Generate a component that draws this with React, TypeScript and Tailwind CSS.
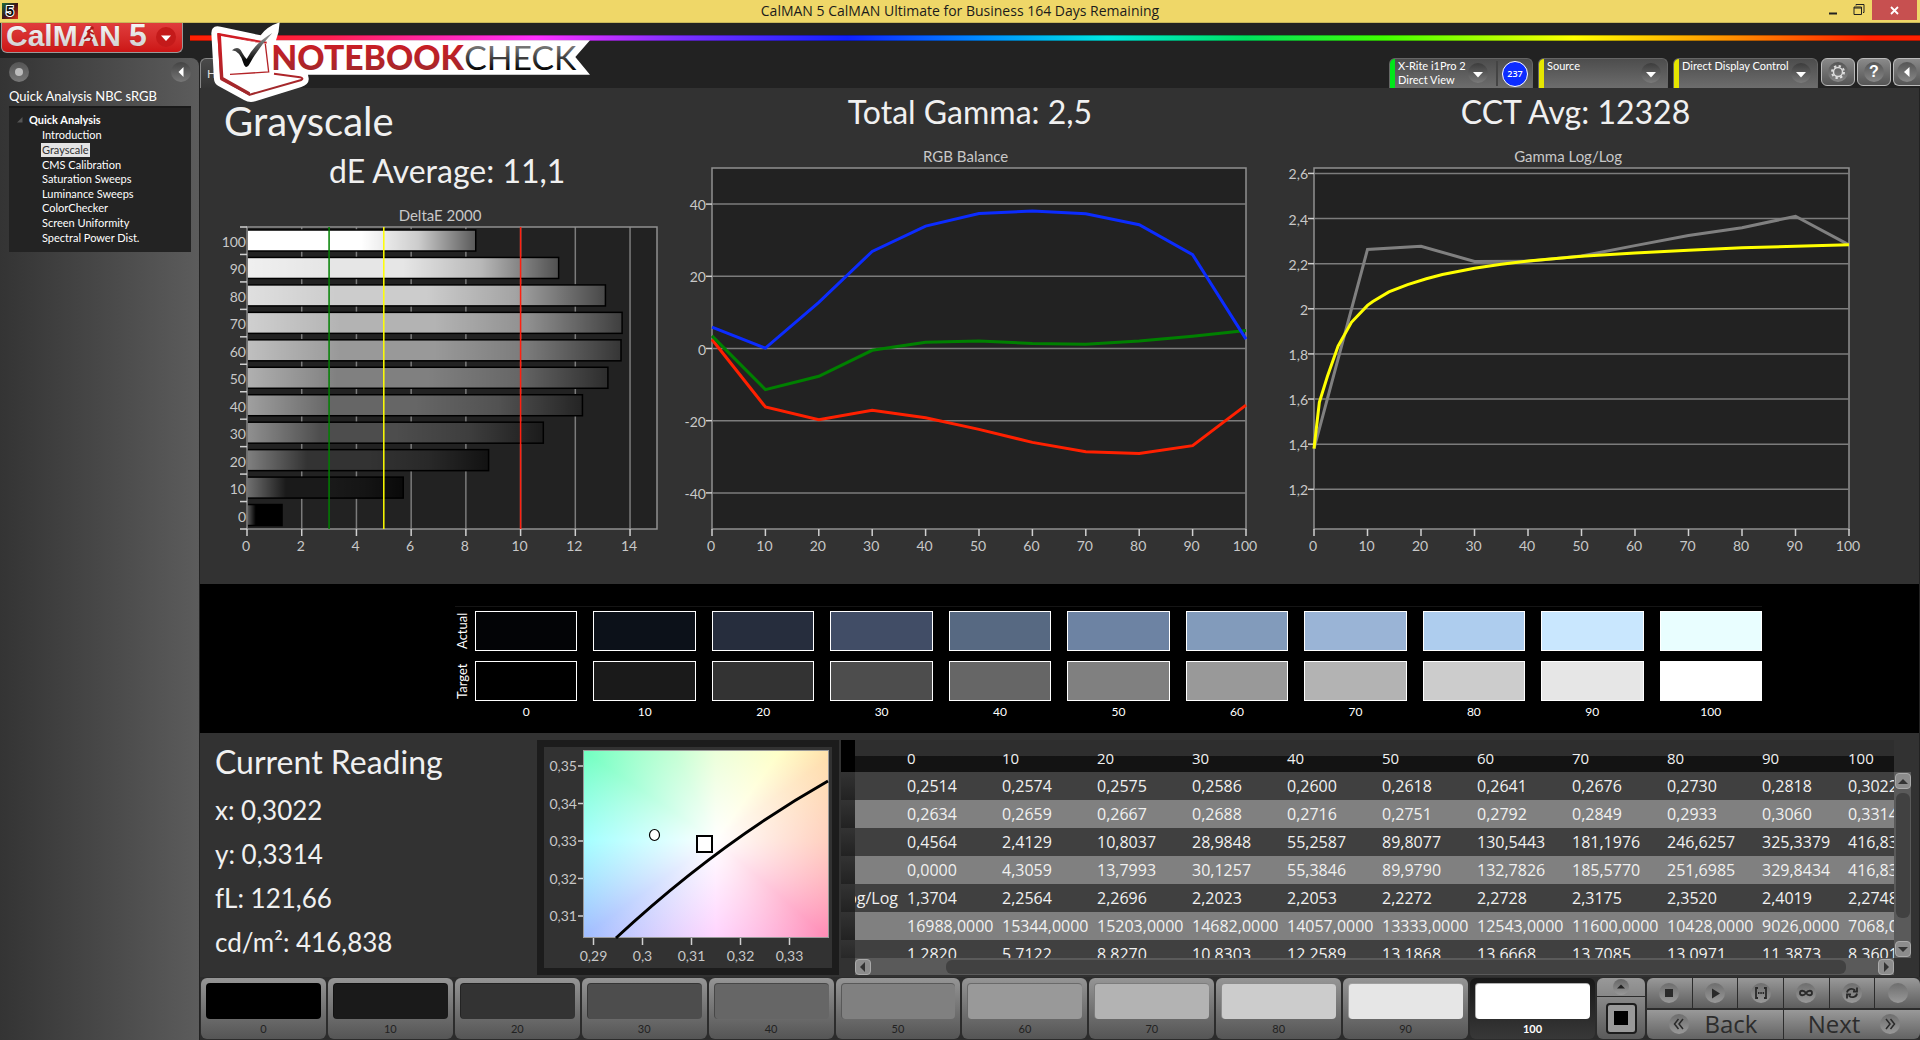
import React, { useState } from 'react'

const levels = [0, 10, 20, 30, 40, 50, 60, 70, 80, 90, 100]
const grays = ['#000000', '#1a1a1a', '#333333', '#4d4d4d', '#666666', '#808080', '#999999', '#b3b3b3', '#cccccc', '#e6e6e6', '#ffffff']
const actual = ['#030406', '#0c1119', '#262d3d', '#414d66', '#576982', '#6d83a3', '#829bbb', '#9ab4d6', '#aecdee', '#c9e7fe', '#e9feff']
const deltaE = [1.28, 5.71, 8.83, 10.83, 12.26, 13.19, 13.67, 13.71, 13.1, 11.39, 8.36]

const rgb = {
  red: [2.5, -16.2, -19.7, -17.1, -19.2, -22.4, -26, -28.6, -29.1, -26.9, -15.7],
  green: [3.5, -11.4, -7.7, -0.5, 1.7, 2.1, 1.4, 1.2, 2.1, 3.4, 5],
  blue: [5.9, 0.1, 12.8, 26.9, 33.9, 37.4, 38.1, 37.3, 34.3, 26, 2.6],
}

const gamma = [1.38, 2.263, 2.277, 2.21, 2.211, 2.234, 2.28, 2.325, 2.359, 2.41, 2.283]
const gammaTarget = [
  [0, 1.38], [1, 1.585], [2.5, 1.7], [4.5, 1.835], [7, 1.94], [10, 2.015], [11, 2.032], [14, 2.075], [17.5, 2.107],
  [21, 2.133], [24, 2.152], [30, 2.18], [35, 2.197], [40, 2.212], [50, 2.233], [60, 2.247], [70, 2.26], [80, 2.27], [90, 2.277], [100, 2.284],
]

const workflow = ['Introduction', 'Grayscale', 'CMS Calibration', 'Saturation Sweeps', 'Luminance Sweeps', 'ColorChecker', 'Screen Uniformity', 'Spectral Power Dist.']

const rows = [
  { label: '', values: ['0,2514', '0,2574', '0,2575', '0,2586', '0,2600', '0,2618', '0,2641', '0,2676', '0,2730', '0,2818', '0,3022'] },
  { label: '', values: ['0,2634', '0,2659', '0,2667', '0,2688', '0,2716', '0,2751', '0,2792', '0,2849', '0,2933', '0,3060', '0,3314'] },
  { label: '', values: ['0,4564', '2,4129', '10,8037', '28,9848', '55,2587', '89,8077', '130,5443', '181,1976', '246,6257', '325,3379', '416,8382'] },
  { label: '', values: ['0,0000', '4,3059', '13,7993', '30,1257', '55,3846', '89,9790', '132,7826', '185,5770', '251,6985', '329,8434', '416,8382'] },
  { label: 'Gamma Log/Log', values: ['1,3704', '2,2564', '2,2696', '2,2023', '2,2053', '2,2272', '2,2728', '2,3175', '2,3520', '2,4019', '2,2748'] },
  { label: '', values: ['16988,0000', '15344,0000', '15203,0000', '14682,0000', '14057,0000', '13333,0000', '12543,0000', '11600,0000', '10428,0000', '9026,0000', '7068,0000'] },
  { label: '', values: ['1,2820', '5,7122', '8,8270', '10,8303', '12,2589', '13,1868', '13,6668', '13,7085', '13,0971', '11,3873', '8,3601'] },
]

const comma = (n: number) => String(n).replace('.', ',')

const TitleBar = () => (
  <div className="relative flex h-[23px] items-start justify-between border-b border-[#c9b75a] bg-[#efd768]">
    <svg className="mt-[3px] ml-0.5 h-4 w-4" viewBox="0 0 16 16">
      <defs>
        <linearGradient id="appIcon" x1="0" y1="0" x2="1" y2="1">
          <stop offset="0" stopColor="#1c6b3a" />
          <stop offset="0.5" stopColor="#3a1418" />
          <stop offset="1" stopColor="#e03018" />
        </linearGradient>
      </defs>
      <rect width="16" height="16" fill="url(#appIcon)" />
      <text x="8" y="13" textAnchor="middle" fontFamily="Liberation Sans" fontWeight="700" fontSize="14" fill="#0a0a0a" stroke="#fff" strokeWidth="2" paintOrder="stroke">5</text>
    </svg>
    <span className="pointer-events-none absolute inset-x-0 text-center font-['Open_Sans',sans-serif] text-sm leading-[22px] text-[#1b1b1b]">
      CalMAN 5 CalMAN Ultimate for Business 164 Days Remaining
    </span>
    <div className="flex h-5 pr-[3px]">
      <button aria-label="Minimize" className="flex w-[26px] items-center justify-center">
        <svg width="10" height="14" viewBox="0 0 10 14"><path d="M1 10.5h8" stroke="#222" strokeWidth="2" /></svg>
      </button>
      <button aria-label="Restore" className="flex w-[26px] items-center justify-center">
        <svg width="12" height="12" viewBox="0 0 12 12" fill="none" stroke="#222">
          <path d="M3 1.5V.5h8v8h-1" />
          <path d="M1 3h7.5v7.5H1zM1 4h7.5" />
        </svg>
      </button>
      <button aria-label="Close" className="flex w-[45px] items-center justify-center bg-[#c75050]">
        <svg width="9" height="9" viewBox="0 0 9 9"><path d="M1 1l7 7M8 1L1 8" stroke="#fff" strokeWidth="1.8" /></svg>
      </button>
    </div>
  </div>
)

const CalmanLogo = () => (
  <svg className="overflow-visible" width="181" height="30" viewBox="0 0 181 30" fontFamily="Liberation Sans" fontWeight="700">
    <defs>
      <linearGradient id="silver" x1="0" y1="0" x2="0" y2="1">
        <stop offset="0" stopColor="#ffffff" />
        <stop offset="1" stopColor="#c9c9c9" />
      </linearGradient>
    </defs>
    <g fill="url(#silver)" stroke="#9c1414" strokeWidth="1" strokeOpacity="0.4" paintOrder="stroke">
      <text x="4" y="23" fontSize="30">CalMAN</text>
      <text x="127" y="23" fontSize="32">5</text>
    </g>
    <path d="M89 6l-4 3M88 8l-2 5 4 2-2 4M86 13l-4 3M88 9l4 2" stroke="#b01818" strokeWidth="1.8" fill="none" />
    <circle cx="90" cy="5" r="1.8" fill="#b01818" />
    <circle cx="164" cy="14" r="10" fill="#c41a1a" />
    <path d="M159 12.500h10l-5 5.500z" fill="#fff" />
  </svg>
)

const NotebookCheck = () => (
  <svg className="absolute top-[10px] left-[200px] z-20" width="400" height="100" viewBox="0 0 1200 300" aria-label="Notebookcheck">
    <defs>
      <linearGradient id="nbRed" x1="0" y1="0" x2="0" y2="1">
        <stop offset="0.1" stopColor="#d01c24" />
        <stop offset="0.9" stopColor="#a1282b" />
      </linearGradient>
      <linearGradient id="nbDark" x1="0" y1="0" x2="0" y2="1">
        <stop offset="0.15" stopColor="#8a8a8a" />
        <stop offset="0.8" stopColor="#0a0a0a" />
      </linearGradient>
    </defs>
    <path d="M52 49Q34 50 34 70L42 208Q43 221 54 227L132 270Q148 280 166 274L304 231Q328 222 326 205L324 194H1170L1126 141L1170 91H228Q238 66 239 37Q200 50 182 76L62 50Z" fill="#fff" />
    <path d="M200 98L55 72L64 208L149 254L304 210Q312 205 300 202L222 191" fill="none" stroke="url(#nbRed)" strokeWidth="6" strokeLinejoin="round" />
    <path d="M52 69L60 207L149 258L150 247L70 202L63 78L190 101Z" fill="url(#nbRed)" />
    <path d="M196 102L206 186L90 193" fill="none" stroke="#b32327" strokeWidth="4" />
    <path d="M96 121Q112 108 122 120Q134 142 140 147Q166 98 217 69Q176 112 149 161Q139 180 132 164Q120 122 96 121Z" fill="url(#nbDark)" />
    <g fontFamily="Lato" fontSize="101">
      <text x="214" y="179" fontWeight="900" fill="url(#nbRed)">NOTEBOOK</text>
      <text x="793" y="179" fill="url(#nbDark)">CHECK</text>
    </g>
  </svg>
)

const Chevron = () => (
  <svg className="h-5 w-5 shrink-0 rounded-full bg-linear-to-b from-[#3c3c3c] to-[#7a7a7a]" viewBox="0 0 20 20">
    <path d="M5 9h10l-5 5.500z" fill="#fff" />
  </svg>
)

const Toolbar = () => (
  <div className="flex h-[30px] items-start">
    <button className="h-[30px] w-[62px] rounded-t-md border-t border-l border-[#888] bg-linear-to-b from-[#4a4a4a] to-[#333] pl-1.5 text-left text-xs text-[#ddd]">H</button>
    <div className="ml-auto flex h-[30px] gap-[5px] text-[11px] leading-[14px] text-white">
      <div className="flex w-[144px] overflow-hidden rounded-t-md border border-b-0 border-[#666] bg-linear-to-b from-[#4d4d4d] to-[#6d6d6d]">
        <span className="w-[5px] bg-[#00e61a]" />
        <button className="flex flex-1 items-start justify-between pl-[3px] pr-2 text-left whitespace-nowrap">
          <span>X-Rite i1Pro 2<br />Direct View</span>
          <span className="pt-1"><Chevron /></span>
        </button>
        <span className="my-0.5 w-0.5 bg-[#444]" />
        <div className="flex w-[34px] items-center justify-center">
          <span className="flex h-[26px] w-[26px] items-center justify-center rounded-full border border-white bg-[#0c2cff] font-['Open_Sans',sans-serif] text-[9px] font-semibold">237</span>
        </div>
      </div>
      <button className="flex w-[130px] items-start overflow-hidden rounded-t-md border border-b-0 border-[#666] bg-linear-to-b from-[#4d4d4d] to-[#6d6d6d] pr-1.5 text-left">
        <span className="h-full w-[5px] bg-[#e6e600]" />
        <span className="flex-1 pl-[3px]">Source</span>
        <span className="pt-1"><Chevron /></span>
      </button>
      <button className="flex w-[145px] items-start overflow-hidden rounded-t-md border border-b-0 border-[#666] bg-linear-to-b from-[#4d4d4d] to-[#6d6d6d] pr-1.5 text-left whitespace-nowrap">
        <span className="h-full w-[5px] bg-[#e6e600]" />
        <span className="flex-1 pl-[3px]">Direct Display Control</span>
        <span className="pt-1"><Chevron /></span>
      </button>
    </div>
    <div className="ml-[3px] flex h-7 gap-0.5">
      <button aria-label="Settings" className="flex w-[34px] items-center justify-center rounded-md border border-[#bbb] bg-linear-to-b from-[#8a8a8a] to-[#555]">
        <svg className="h-5 w-5 rounded-full bg-linear-to-b from-[#555] to-[#888]" viewBox="0 0 20 20" fill="none" stroke="#ddd">
          <circle cx="10" cy="10" r="4.500" strokeWidth="1.500" />
          <circle cx="10" cy="10" r="6" strokeWidth="2" strokeDasharray="2.350 2.350" />
        </svg>
      </button>
      <button aria-label="Help" className="flex w-[34px] items-center justify-center rounded-md border border-[#bbb] bg-linear-to-b from-[#8a8a8a] to-[#555]">
        <span className="h-5 w-5 rounded-full bg-linear-to-b from-[#555] to-[#888] text-center font-['Liberation_Sans',sans-serif] text-base leading-5 font-bold text-white">?</span>
      </button>
      <button aria-label="Collapse" className="flex w-[27px] items-center justify-center rounded-l-md border border-r-0 border-[#bbb] bg-linear-to-b from-[#8a8a8a] to-[#555]">
        <svg className="h-5 w-5 rounded-full bg-linear-to-b from-[#555] to-[#888]" viewBox="0 0 20 20"><path d="M12.500 5v10L7 10z" fill="#fff" /></svg>
      </button>
    </div>
  </div>
)

const Sidebar = () => {
  const [current, setCurrent] = useState('Grayscale')
  return (
    <aside className="mr-px w-[199px] shrink-0 rounded-tr-lg bg-linear-to-r from-[#343434] to-[#5c5c5c] pt-1 pr-2 pl-[9px]">
      <div className="flex h-5 justify-between">
        <button aria-label="Record" className="flex h-5 w-5 items-center justify-center rounded-full bg-linear-to-b from-[#555] to-[#777]">
          <span className="h-2 w-2 rounded-full bg-[#bbb]" />
        </button>
        <button aria-label="Hide panel" className="h-5 w-5 rounded-full bg-linear-to-b from-[#444] to-[#777]">
          <svg viewBox="0 0 20 20"><path d="M12.500 5v10L7.500 10z" fill="#fff" /></svg>
        </button>
      </div>
      <h2 className="mt-1.5 text-[13px] leading-4 whitespace-nowrap text-white">Quick Analysis NBC sRGB</h2>
      <nav className="mt-0.5 h-[146px] border-t-2 border-[#1a1a1a] bg-[#232323] pt-1 text-[11px] text-white">
        <div className="flex items-center gap-1.5 pl-2 leading-4 font-bold">
          <svg width="6" height="6" viewBox="0 0 6 6"><path d="M5.500 0v5.500H0z" fill="#555" /></svg>
          Quick Analysis
        </div>
        <ul className="grid h-[117px] pl-8">
          {workflow.map((item) => (
            <li key={item} className="flex items-center">
              <a href="#" onClick={() => setCurrent(item)} className={`px-px leading-[14px] ${item === current ? 'bg-[#e4e4e4] text-[#333]' : ''}`}>
                {item}
              </a>
            </li>
          ))}
        </ul>
      </nav>
    </aside>
  )
}

const DeltaChart = () => {
  const x = (v: number) => 47 + v * 27.36
  const band = 302 / 11
  return (
    <svg className="h-auto w-full" viewBox="0 0 472 360" fontSize="14" fill="#c8c8c8">
      <defs>
        <linearGradient id="shade">
          <stop offset="0" stopColor="#fff" stopOpacity="0.38" />
          <stop offset="0.25" stopColor="#fff" stopOpacity="0" />
          <stop offset="0.5" stopColor="#000" stopOpacity="0" />
          <stop offset="0.75" stopColor="#000" stopOpacity="0.2" />
          <stop offset="1" stopColor="#000" stopOpacity="0.65" />
        </linearGradient>
      </defs>
      <text x="240" y="15" fontSize="15" textAnchor="middle">DeltaE 2000</text>
      <rect x="47" y="21" width="410" height="302" fill="#222" />
      {[2, 4, 6, 8, 10, 12, 14].map((v) => <path key={v} d={`M${x(v)} 21V323`} stroke="#7c7c7c" strokeWidth="1.500" />)}
      {deltaE.map((v, i) => (
        <g key={i}>
          <rect x="47" y={24 + (10 - i) * band} width={v * 27.36} height="21" fill={grays[i]} />
          <rect x="47" y={24 + (10 - i) * band} width={v * 27.36} height="21" fill="url(#shade)" stroke="#000" strokeWidth="1.500" />
        </g>
      ))}
      <rect x="47" y="21" width="410" height="302" fill="none" stroke="#909090" strokeWidth="1.500" />
      <path d={`M${x(3)} 21V323`} stroke="#008000" strokeWidth="1.500" />
      <path d={`M${x(5)} 21V323`} stroke="#ffff00" strokeWidth="1.500" />
      <path d={`M${x(10)} 21V323`} stroke="#ff2010" strokeWidth="1.500" />
      {levels.map((v, i) => (
        <text key={v} x="46" y={41 + (10 - i) * band} textAnchor="end">{v}</text>
      ))}
      {[...levels, 110].map((v, i) => <path key={v} d={`M40 ${21 + i * band}h7`} stroke="#d0d0d0" strokeWidth="1.500" />)}
      {[0, 2, 4, 6, 8, 10, 12, 14].map((v) => (
        <g key={v}>
          <path d={`M${x(v)} 323v7`} stroke="#d0d0d0" strokeWidth="1.500" />
          <text x={x(v) - 1} y="345" textAnchor="middle">{v}</text>
        </g>
      ))}
    </svg>
  )
}

type LineChartProps = {
  title: string
  width: number
  left: number
  plot: number
  min: number
  max: number
  ticks: number[]
  lines: { color: string; points: number[][] }[]
}

const LineChart = ({ title, width, left, plot, min, max, ticks, lines }: LineChartProps) => {
  const x = (v: number) => left + (v / 100) * plot
  const y = (v: number) => 21 + ((max - v) / (max - min)) * 361
  return (
    <svg className="h-auto w-full" viewBox={`0 0 ${width} 420`} fontSize="14" fill="#c8c8c8">
      <text x={left + plot * 0.475} y="15" fontSize="15" textAnchor="middle">{title}</text>
      <rect x={left} y="21" width={plot} height="361" fill="#222" stroke="#909090" strokeWidth="1.500" />
      {ticks.map((t) => (
        <g key={t}>
          <path d={`M${left} ${y(t)}h${plot}`} stroke="#7c7c7c" strokeWidth="1.500" />
          <path d={`M${left - 6} ${y(t)}h6`} stroke="#d0d0d0" strokeWidth="1.500" />
          <text x={left - 6} y={y(t) + 6} textAnchor="end">{comma(t)}</text>
        </g>
      ))}
      {levels.map((v) => (
        <g key={v}>
          <path d={`M${x(v)} 382v7`} stroke="#d0d0d0" strokeWidth="1.500" />
          <text x={x(v) - 1} y="404" textAnchor="middle">{v}</text>
        </g>
      ))}
      {lines.map((l) => (
        <polyline key={l.color} points={l.points.map(([px, py]) => `${x(px)},${y(py)}`).join(' ')} fill="none" stroke={l.color} strokeWidth="3" />
      ))}
    </svg>
  )
}

const zip = (values: number[]) => values.map((v, i) => [i * 10, v])

const Charts = () => (
  <section className="grid grid-cols-[472fr_596fr_651fr] pb-[17px] text-[#f0f0f0]">
    <div>
      <h1 className="pt-3 pl-6 text-[40px] leading-[42px]">Grayscale</h1>
      <h2 className="pt-2 pb-3.5 pl-[129px] text-[32px] leading-[42px]">dE Average: 11,1</h2>
      <DeltaChart />
    </div>
    <div>
      <h2 className="h-[59px] text-center text-[32px] leading-[48px]">Total Gamma: 2,5</h2>
      <LineChart
        title="RGB Balance" width={596} left={40} plot={534} min={-50} max={50} ticks={[40, 20, 0, -20, -40]}
        lines={[
          { color: '#ff2000', points: zip(rgb.red) },
          { color: '#008000', points: zip(rgb.green) },
          { color: '#0c2cff', points: zip(rgb.blue) },
        ]}
      />
    </div>
    <div>
      <h2 className="h-[59px] pr-9 text-center text-[32px] leading-[48px]">CCT Avg: 12328</h2>
      <LineChart
        title="Gamma Log/Log" width={651} left={46} plot={535} min={1.024} max={2.624} ticks={[2.6, 2.4, 2.2, 2, 1.8, 1.6, 1.4, 1.2]}
        lines={[
          { color: '#808080', points: zip(gamma) },
          { color: '#ffff00', points: gammaTarget },
        ]}
      />
    </div>
  </section>
)

const Swatches = () => (
  <section className="h-[149px] bg-black pt-[22px] pr-[157px] pl-[255px] text-xs text-white">
    <div className="grid grid-cols-[20px_1fr] gap-y-2.5 border-t border-[#151515] pt-1">
      <span className="flex h-10 w-4 items-center justify-center text-[13px] whitespace-nowrap [writing-mode:vertical-rl] rotate-180">Actual</span>
      <div className="grid grid-cols-11 gap-4">
        {actual.map((c) => <div key={c} className="h-10 border border-white" style={{ background: c }} />)}
      </div>
      <span className="flex h-10 w-4 items-center justify-center text-[13px] whitespace-nowrap [writing-mode:vertical-rl] rotate-180">Target</span>
      <div className="grid grid-cols-11 gap-4">
        {grays.map((c) => <div key={c} className="h-10 border border-white" style={{ background: c }} />)}
      </div>
    </div>
    <div className="grid grid-cols-11 gap-4 pt-0.5 pl-5 text-center leading-[18px]">
      {levels.map((v) => <span key={v}>{v}</span>)}
    </div>
  </section>
)

const CieChart = () => (
  <div className="h-[235px] w-[302px] shrink-0 border-[7px] border-[#1c1c1c] bg-[#323232]">
    <svg width="288" height="221" viewBox="7 7 288 221" fontSize="14" fill="#c8c8c8">
      <foreignObject x="46" y="10" width="246" height="188">
        <div className="h-[188px] w-[246px] border border-[#999] bg-[radial-gradient(circle_at_54%_48%,#fff_0,transparent_160px),conic-gradient(from_0deg_at_54%_48%,#dcffbc_0deg,#ffffae_36deg,#ffd9a0_54deg,#ffbca4_90deg,#ff82b0_131deg,#ffb8fe_180deg,#a2beff_234deg,#90ffff_270deg,#70ffc0_304deg,#9cffb8_335deg,#dcffbc_360deg)]" />
      </foreignObject>
      <path d="M79 198Q180 104 291 41" fill="none" stroke="#000" strokeWidth="3" />
      <ellipse cx="117.500" cy="95" rx="5" ry="5.500" fill="#fff" stroke="#000" strokeWidth="1.200" />
      <rect x="160" y="96" width="15" height="16" fill="#fff" stroke="#000" strokeWidth="2" />
      {['0,35', '0,34', '0,33', '0,32', '0,31'].map((t, i) => (
        <g key={t}>
          <path d={`M41 ${26 + i * 37.5}h5`} stroke="#d0d0d0" strokeWidth="1.500" />
          <text x="40" y={31 + i * 37.5} textAnchor="end">{t}</text>
        </g>
      ))}
      {['0,29', '0,3', '0,31', '0,32', '0,33'].map((t, i) => (
        <g key={t}>
          <path d={`M${56.5 + i * 49} 198v7`} stroke="#d0d0d0" strokeWidth="1.500" />
          <text x={56.5 + i * 49} y="221" textAnchor="middle">{t}</text>
        </g>
      ))}
    </svg>
  </div>
)

const Arrow = ({ d }: { d: string }) => (
  <svg className="h-4 w-4 shrink-0 rounded border border-[#aaa] bg-[#8c8c8c]" viewBox="0 0 14 14"><path d={d} fill="#333" /></svg>
)

const DataTable = () => (
  <div className="flex min-w-0 flex-1 flex-col pr-2">
    <div className="flex h-[218px]">
      <div className="min-w-0 flex-1 overflow-hidden">
        <table className="w-full table-fixed border-collapse text-left font-['Open_Sans',sans-serif] text-[#f0f0f0]">
          <colgroup>
            <col className="w-3.5" />
            <col className="w-[47px]" />
            {levels.slice(0, 9).map((v) => <col key={v} className="w-[95px]" />)}
            <col className="w-[86px]" />
            <col />
          </colgroup>
          <thead>
            <tr className="h-8 bg-linear-to-b from-[#2e2e2e] from-50% to-[#131313] to-50% text-[15px] leading-5">
              <td className="bg-black" />
              <td />
              {levels.map((v) => <th key={v} scope="col" className="pt-1 pl-[5px] font-medium">{v}</th>)}
            </tr>
          </thead>
          <tbody>
            {rows.map((row, i) => (
              <tr key={i} className="h-7 text-base leading-5 odd:bg-[#404040] even:bg-[#808080]">
                <td className="bg-linear-to-b from-[#333] to-[#222]" />
                <td className="overflow-hidden">
                  <div className="flex justify-end pr-1 whitespace-nowrap">{row.label}</div>
                </td>
                {row.values.map((v, j) => <td key={j} className="pl-[5px] whitespace-nowrap">{v}</td>)}
              </tr>
            ))}
          </tbody>
        </table>
      </div>
      <div className="mt-8 flex w-[17px] flex-col items-center gap-1 bg-[#5a5a5a] py-px">
        <Arrow d="M2 10h10L7 5z" />
        <div className="h-[125px] w-3.5 rounded-md bg-[#414141]" />
        <span className="mt-auto"><Arrow d="M2 5h10l-5 5z" /></span>
      </div>
    </div>
    <div className="mr-[17px] ml-3.5 flex h-[17px] items-center justify-between bg-[#5a5a5a]">
      <Arrow d="M9 2v10L4 7z" />
      <div className="mr-8 ml-[75px] h-3.5 flex-1 rounded-md bg-[#414141]" />
      <Arrow d="M5 2v10l5-5z" />
    </div>
  </div>
)

const Reading = () => (
  <section className="flex pt-[7px]">
    <div className="w-[337px] shrink-0 pl-[15px] text-[26px] leading-[44px] text-[#f0f0f0]">
      <h2 className="mb-1 text-[32px]">Current Reading</h2>
      <p>x: 0,3022</p>
      <p>y: 0,3314</p>
      <p>fL: 121,66</p>
      <p>cd/m²: 416,838</p>
    </div>
    <CieChart />
    <div className="w-0.5" />
    <DataTable />
  </section>
)

const controls: { name: string; icon: React.ReactNode }[] = [
  { name: 'Stop', icon: <rect x="6" y="6" width="8" height="8" fill="#2a2a2a" /> },
  { name: 'Play', icon: <path d="M7 5.500v10l8-5z" fill="#2a2a2a" /> },
  { name: 'Range', icon: <path d="M7 5H5v10h2M13 5h2v10h-2M7 10h1.500M9.300 10h1.500M11.600 10h1.500" stroke="#2a2a2a" strokeWidth="1.800" fill="none" /> },
  { name: 'Loop', icon: <path d="M10 10C8 7 4 7 4 10S8 13 10 10S16 7 16 10S12 13 10 10z" stroke="#2a2a2a" strokeWidth="1.800" fill="none" /> },
  { name: 'Refresh', icon: <path d="M5 9.500C5.500 6 10 4.500 13 7.200M15 4.500v4h-4M15 10.500C14.500 14 10 15.500 7 12.800M5 15.500v-4h4" stroke="#2a2a2a" strokeWidth="1.800" fill="none" /> },
  { name: 'Blank', icon: null },
]

const BottomBar = () => {
  const [selected, setSelected] = useState(100)
  return (
    <footer className="flex h-[63px] gap-0.5 bg-[#2c2c2c] pt-px pb-px pl-px">
      <div className="grid flex-1 grid-cols-11 gap-0.5">
        {levels.map((v, i) => (
          <button
            key={v}
            onClick={() => setSelected(v)}
            className={`flex flex-col rounded-md px-[5px] pt-[5px] text-[11px] ${selected === v ? 'bg-linear-to-b from-[#181818] to-[#383838] font-bold text-white' : 'bg-linear-to-b from-[#959595] to-[#555] text-[#222]'}`}
          >
            <span className="h-9 w-full rounded border-t border-l border-black/30" style={{ background: grays[i] }} />
            <span className="w-full text-center leading-[20px]">{v}</span>
          </button>
        ))}
      </div>
      <div className="flex w-[48px] flex-col gap-px">
        <button aria-label="Expand" className="flex h-[18px] items-center justify-center rounded-t-md bg-linear-to-b from-[#999] to-[#888]">
          <svg className="h-4 w-4 rounded-full bg-linear-to-b from-[#666] to-[#999]" viewBox="0 0 16 16"><path d="M4 9.500h8l-4-4z" fill="#222" /></svg>
        </button>
        <button aria-label="Pattern window" className="flex flex-1 items-center justify-center rounded-b-md bg-linear-to-b from-[#888] to-[#5a5a5a]">
          <span className="flex h-[31px] w-[31px] items-center justify-center rounded border-2 border-[#1c1c1c] bg-[#999]">
            <span className="h-3.5 w-3.5 bg-black" />
          </span>
        </button>
      </div>
      <div className="flex w-[273px] flex-col gap-0.5 overflow-hidden rounded-md">
        <div className="grid flex-1 grid-cols-6 gap-px">
          {controls.map((c) => (
            <button key={c.name} aria-label={c.name} className="flex items-center justify-center bg-linear-to-b from-[#999] to-[#5e5e5e]">
              <svg className="h-5 w-5 rounded-full bg-linear-to-b from-[#6e6e6e] to-[#999]" viewBox="0 0 20 20">{c.icon}</svg>
            </button>
          ))}
        </div>
        <div className="grid h-[29px] grid-cols-2 gap-px font-['Open_Sans',sans-serif] text-2xl leading-7 font-medium text-[#2c2c2c]">
          <button className="flex items-center justify-center gap-4 bg-linear-to-b from-[#999] to-[#5e5e5e] pr-1 pb-1">
            <svg className="h-5 w-5 rounded-full bg-linear-to-b from-[#6e6e6e] to-[#999]" viewBox="0 0 20 20"><path d="M9.500 5l-4 5 4 5M14 5l-4 5 4 5" stroke="#2a2a2a" strokeWidth="1.500" fill="none" /></svg>
            Back
          </button>
          <button className="flex items-center justify-center gap-5 bg-linear-to-b from-[#999] to-[#5e5e5e] pl-1 pb-1">
            Next
            <svg className="h-5 w-5 rounded-full bg-linear-to-b from-[#6e6e6e] to-[#999]" viewBox="0 0 20 20"><path d="M6 5l4 5-4 5M10.500 5l4 5-4 5" stroke="#2a2a2a" strokeWidth="1.500" fill="none" /></svg>
          </button>
        </div>
      </div>
    </footer>
  )
}

const App = () => {
  return (
    <div className="relative flex min-h-screen flex-col overflow-hidden bg-[#222] font-['Lato',sans-serif]">
      <TitleBar />
      <header className="flex h-[35px] items-start">
        <button aria-label="CalMAN menu" className="ml-px h-[30px] w-[182px] rounded-b-md border border-t-0 border-[#999] bg-linear-to-b from-[#e03c3c] to-[#cc1414]">
          <CalmanLogo />
        </button>
        <div className="mt-3 ml-[7px] h-1.5 flex-1 border-y border-black/30 bg-[linear-gradient(90deg,#ff2000_0%,#ff2050_8%,#ff30ff_20%,#8030ff_28%,#1020ff_38%,#0090ff_46%,#00e8e0_53%,#00e060_61%,#40ff00_69%,#ffff00_80%,#ff9000_89%,#ff2000_97%)]" />
      </header>
      <div className="flex flex-1">
        <Sidebar />
        <div className="flex min-w-0 flex-1 flex-col">
          <Toolbar />
          <main className="mr-px flex-1 bg-[#323232]">
            <Charts />
            <Swatches />
            <Reading />
          </main>
          <BottomBar />
        </div>
      </div>
      <NotebookCheck />
    </div>
  )
}

export default App
